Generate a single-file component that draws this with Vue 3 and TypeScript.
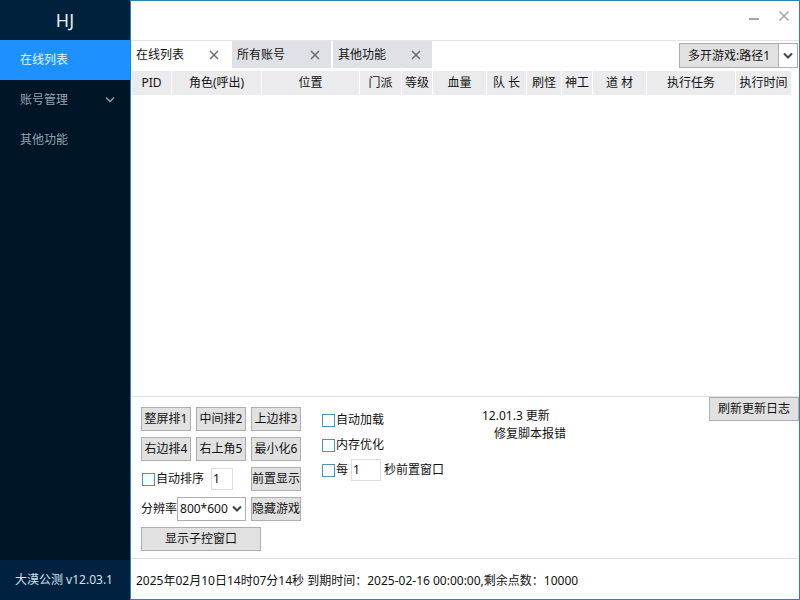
<script setup lang="ts">
import { ref } from 'vue'

interface NavItem { label: string; expandable?: boolean }
interface Column { title: string; width?: number }

const navItems: NavItem[] = [
  { label: '在线列表' },
  { label: '账号管理', expandable: true },
  { label: '其他功能' },
]
const tabs = ref<string[]>(['在线列表', '所有账号', '其他功能'])
const activeNav = ref(0)
const activeTab = ref(0)

const columns: Column[] = [
  { title: 'PID', width: 40 },
  { title: '角色(呼出)', width: 90 },
  { title: '位置', width: 98 },
  { title: '门派', width: 42 },
  { title: '等级', width: 31 },
  { title: '血量', width: 54 },
  { title: '队 长', width: 40 },
  { title: '刷怪', width: 35 },
  { title: '神工', width: 31 },
  { title: '道 材', width: 54 },
  { title: '执行任务' },
  { title: '执行时间', width: 56 },
]

const autoSort = ref(false)
const autoLoad = ref(false)
const memOptimize = ref(false)
const bringFront = ref(false)
const sortValue = ref('1')
const seconds = ref('1')
const resolution = ref('800*600')

function closeTab(i: number) {
  tabs.value.splice(i, 1)
  if (activeTab.value >= tabs.value.length) activeTab.value = 0
}
</script>

<template>
  <div class="window">
    <aside class="sidebar">
      <h1 class="brand">HJ</h1>
      <nav class="nav">
        <a
          v-for="(item, i) in navItems"
          :key="item.label"
          href="#"
          class="nav-item"
          :class="{ active: i === activeNav }"
          @click.prevent="activeNav = i"
        >
          <span>{{ item.label }}</span>
          <svg v-if="item.expandable" width="10" height="8" viewBox="0 0 10 8">
            <path d="M1 1.5 5 5.5 9 1.5" fill="none" stroke="#8d9aa8" stroke-width="1.6" />
          </svg>
        </a>
      </nav>
      <footer class="version">大漠公测 v12.03.1</footer>
    </aside>

    <main class="main">
      <header class="titlebar">
        <button class="win-btn" type="button" aria-label="最小化">
          <svg width="12" height="12" viewBox="0 0 12 12"><path d="M1 9H11" stroke="#a6a6a6" stroke-width="2" /></svg>
        </button>
        <button class="win-btn" type="button" aria-label="关闭">
          <svg width="12" height="12" viewBox="0 0 12 12"><path d="M1.5 1.5 10.5 10.5M10.5 1.5 1.5 10.5" stroke="#a6a6a6" stroke-width="1.6" /></svg>
        </button>
      </header>

      <div class="tabbar">
        <div v-for="(tab, i) in tabs" :key="tab" class="tab" :class="{ active: i === activeTab }">
          <button class="tab-label" type="button" @click="activeTab = i">{{ tab }}</button>
          <button class="tab-close" type="button" aria-label="关闭标签" @click="closeTab(i)">
            <svg width="10" height="10" viewBox="0 0 10 10"><path d="M1 1 9 9M9 1 1 9" stroke="#6b6b6b" stroke-width="1.5" /></svg>
          </button>
        </div>
        <div class="split">
          <button class="btn split-main" type="button">多开游戏:路径1</button>
          <button class="split-arrow" type="button" aria-label="选择路径">
            <svg width="10" height="8" viewBox="0 0 10 8"><path d="M1 1.5 5 5.5 9 1.5" fill="none" stroke="#444" stroke-width="2" /></svg>
          </button>
        </div>
      </div>

      <section class="list">
        <table class="grid">
          <colgroup>
            <col v-for="c in columns" :key="c.title" :style="c.width ? { width: c.width + 'px' } : undefined" />
          </colgroup>
          <thead>
            <tr><th v-for="c in columns" :key="c.title" scope="col">{{ c.title }}</th></tr>
          </thead>
          <tbody></tbody>
        </table>
      </section>

      <section class="panel">
        <div class="controls">
          <button class="btn" type="button">整屏排1</button>
          <button class="btn" type="button">中间排2</button>
          <button class="btn" type="button">上边排3</button>
          <button class="btn" type="button">右边排4</button>
          <button class="btn" type="button">右上角5</button>
          <button class="btn" type="button">最小化6</button>
          <div class="pair sort">
            <label class="check"><input v-model="autoSort" type="checkbox" />自动排序</label>
            <input v-model="sortValue" class="text short" type="text" aria-label="排序值" />
          </div>
          <button class="btn" type="button">前置显示</button>
          <div class="pair">
            <label for="resolution">分辨率</label>
            <span class="select">
              <select id="resolution" v-model="resolution">
                <option>800*600</option>
              </select>
              <svg width="10" height="8" viewBox="0 0 10 8"><path d="M1 1.5 5 5.5 9 1.5" fill="none" stroke="#444" stroke-width="2" /></svg>
            </span>
          </div>
          <button class="btn" type="button">隐藏游戏</button>
          <button class="btn wide" type="button">显示子控窗口</button>
        </div>

        <div class="options">
          <label class="check"><input v-model="autoLoad" type="checkbox" />自动加载</label>
          <label class="check"><input v-model="memOptimize" type="checkbox" />内存优化</label>
          <div class="option-row">
            <label class="check"><input v-model="bringFront" type="checkbox" />每</label>
            <input id="seconds" v-model="seconds" class="text" type="text" />
            <label for="seconds">秒前置窗口</label>
          </div>
        </div>

        <div class="log">
          <p>12.01.3 更新</p>
          <p class="log-item">修复脚本报错</p>
        </div>

        <button class="btn refresh" type="button">刷新更新日志</button>
      </section>

      <footer class="status">2025年02月10日14时07分14秒 到期时间：2025-02-16 00:00:00,剩余点数：10000</footer>
    </main>
  </div>
</template>

<style>
body {
  margin: 0;
}
</style>

<style scoped>
.window {
  display: flex;
  min-height: 100vh;
  font-family: "Noto Sans", "Noto Sans CJK SC", sans-serif;
  font-size: 12px;
  line-height: 18px;
  color: #111;
  background: #fff;
}
.window *,
.window *::before {
  box-sizing: border-box;
}
button,
input,
select {
  margin: 0;
  padding: 0;
  font: inherit;
  color: inherit;
}
svg {
  display: block;
  flex: none;
}

.sidebar {
  display: flex;
  flex-direction: column;
  flex: 0 0 130px;
  background: #001528;
  color: #fff;
}
.brand {
  margin: 0;
  height: 40px;
  line-height: 40px;
  font-size: 18px;
  font-weight: 400;
  text-align: center;
  color: #e6f0f5;
  background: #00213c;
}
.nav {
  flex: 1;
}
.nav-item {
  display: flex;
  align-items: center;
  justify-content: space-between;
  height: 40px;
  padding: 0 15px 0 20px;
  color: #98a3ae;
  text-decoration: none;
}
.nav-item.active {
  color: #e8f6ff;
  background: #1e90ff;
}
.version {
  height: 40px;
  padding-left: 15px;
  line-height: 40px;
  color: #d5e2ec;
  background: #00213f;
}

.main {
  display: flex;
  flex-direction: column;
  flex: 1;
  min-width: 0;
  border: 1px solid #2b85a8;
}
.titlebar {
  display: flex;
  justify-content: flex-end;
  align-items: flex-start;
  gap: 18px;
  height: 40px;
  padding: 9px 9px 0 0;
  border-bottom: 1px solid #e2e4e6;
}
.win-btn {
  width: 12px;
  height: 12px;
  border: 0;
  background: none;
}

.tabbar {
  display: flex;
  align-items: flex-start;
  gap: 2px;
  height: 30px;
}
.tab {
  display: flex;
  align-items: center;
  width: 99px;
  height: 27px;
  padding: 0 11px 0 5px;
  justify-content: space-between;
  background: #dfe1e6;
}
.tab.active {
  background: #fff;
}
.tab-label,
.tab-close {
  border: 0;
  background: none;
}
.split {
  display: flex;
  height: 25px;
  margin: 2px 1px 0 auto;
}
.btn {
  height: 24px;
  border: 1px solid #adadad;
  background: #e1e1e1;
  white-space: nowrap;
}
.split .split-main {
  width: 100px;
  height: 25px;
}
.split-arrow {
  display: flex;
  align-items: center;
  justify-content: center;
  width: 19px;
  border: 1px solid #adadad;
  border-left: 0;
  background: #fff;
}

.list {
  flex: 1;
  padding: 0 7px 0 1px;
}
.grid {
  width: 100%;
  table-layout: fixed;
  border-collapse: separate;
  border-spacing: 0;
}
.grid th {
  height: 24px;
  padding: 0;
  font-weight: 400;
  white-space: nowrap;
  border-right: 1px solid #fff;
  background: #ebebee;
}

.panel {
  display: flex;
  align-items: flex-start;
  height: 163px;
  padding-left: 10px;
  border-top: 1px solid #dfe1e3;
  border-bottom: 1px solid #dfe1e3;
}
.controls {
  display: grid;
  grid-template-columns: repeat(3, 50px);
  grid-auto-rows: 24px;
  gap: 6px 5px;
  padding-top: 10px;
}
.pair {
  display: flex;
  align-items: center;
  grid-column: span 2;
  white-space: nowrap;
}
.sort {
  justify-content: space-between;
  padding: 0 13px 0 1px;
}
.wide {
  width: 120px;
  grid-column: span 3;
}
.check {
  display: flex;
  align-items: center;
  gap: 1px;
  white-space: nowrap;
}
.check input {
  appearance: none;
  width: 13px;
  height: 13px;
  border: 1px solid #4f92b5;
  background: #f8fdff;
}
.check input:checked {
  background: #4f92b5;
}
.text {
  width: 30px;
  height: 22px;
  padding: 0 1px 2px;
  border: 1px solid #dcdfe1;
  background: #fff;
}
.short {
  width: 22px;
}
.select {
  display: grid;
  align-items: center;
  flex: 1;
  height: 24px;
}
.select select,
.select svg {
  grid-area: 1 / 1;
}
.select select {
  appearance: none;
  width: 100%;
  height: 24px;
  padding-left: 2px;
  border: 1px solid #adadad;
  border-radius: 0;
  background: #fff;
}
.select svg {
  justify-self: end;
  margin-right: 4px;
  pointer-events: none;
}

.options {
  display: flex;
  flex-direction: column;
  gap: 3px;
  width: 160px;
  margin-left: 21px;
  padding-top: 12px;
}
.options .check,
.option-row {
  height: 22px;
}
.option-row {
  display: flex;
  align-items: center;
  gap: 3px;
  white-space: nowrap;
}
.log {
  flex: 1;
  padding-top: 10px;
}
.log p {
  margin: 0;
}
.log .log-item {
  padding-left: 12px;
}
.refresh {
  width: 90px;
}

.status {
  height: 40px;
  padding-left: 5px;
  line-height: 44px;
}
</style>
